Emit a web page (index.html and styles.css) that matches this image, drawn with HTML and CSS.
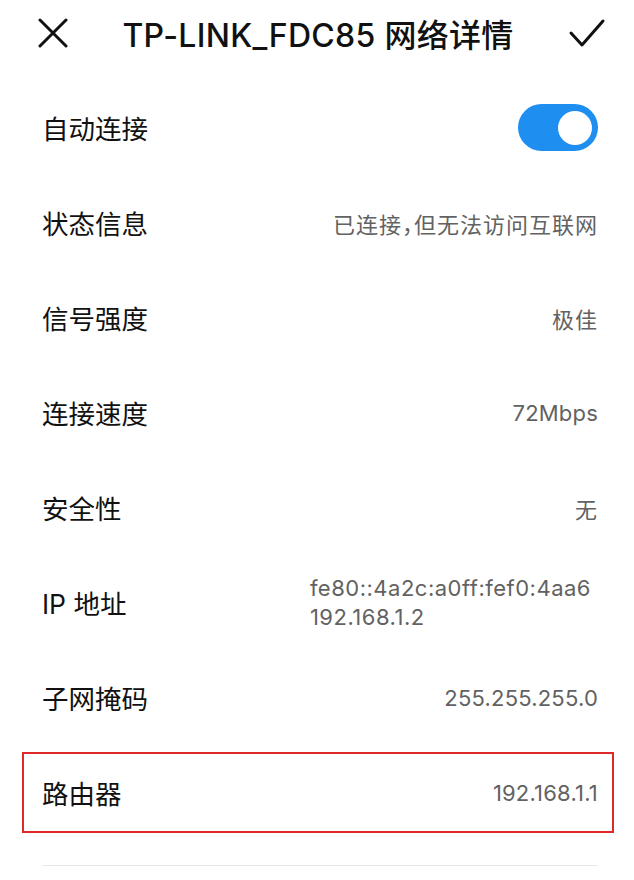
FILE: index.html
```html
<!DOCTYPE html>
<html lang="zh-CN">
<head>
<meta charset="UTF-8">
<meta name="viewport" content="width=device-width, initial-scale=1.0">
<title>网络详情</title>
<link rel="stylesheet" href="styles.css">
</head>
<body>
<div class="page">
    <div class="header">
        <svg class="icon" width="30" height="30" viewBox="0 0 30 30">
            <path d="M2 2 L28 28 M28 2 L2 28" stroke="#111" stroke-width="3" fill="none" stroke-linecap="round"/>
        </svg>
        <h1>TP-LINK_FDC85 网络详情</h1>
        <svg class="icon" width="38" height="30" viewBox="0 0 38 30">
            <path d="M3 15 L14 27 L35 3" stroke="#111" stroke-width="3" fill="none" stroke-linecap="round" stroke-linejoin="round"/>
        </svg>
    </div>

    <div class="list">
        <div class="row">
            <span class="label">自动连接</span>
            <span class="switch on"><span class="knob"></span></span>
        </div>
        <div class="row">
            <span class="label">状态信息</span>
            <span class="value">已连接，但无法访问互联网</span>
        </div>
        <div class="row">
            <span class="label">信号强度</span>
            <span class="value">极佳</span>
        </div>
        <div class="row">
            <span class="label">连接速度</span>
            <span class="value latin">72Mbps</span>
        </div>
        <div class="row">
            <span class="label">安全性</span>
            <span class="value">无</span>
        </div>
        <div class="row">
            <span class="label">IP 地址</span>
            <span class="value latin multi">fe80::4a2c:a0ff:fef0:4aa6<br>192.168.1.2</span>
        </div>
        <div class="row">
            <span class="label">子网掩码</span>
            <span class="value latin">255.255.255.0</span>
        </div>
        <div class="row highlight">
            <span class="label">路由器</span>
            <span class="value latin">192.168.1.1</span>
        </div>
        <div class="divider"></div>
    </div>
</div>
</body>
</html>
```

FILE: styles.css
```css
body {
    margin: 0;
    padding: 0;
    background-color: #ffffff;
    font-family: Inter, "Noto Sans CJK SC", sans-serif;
    color: #111111;
}

.page {
    width: 634px;
    height: 880px;
    overflow: hidden;
}

.header {
    height: 66px;
    display: flex;
    align-items: center;
    justify-content: space-between;
    padding: 0 28px 0 38px;
}

.header h1 {
    margin: 0;
    font-size: 32px;
    font-weight: 500;
    letter-spacing: 0.3px;
}

.list {
    margin-top: 14px;
    padding: 0 36px 0 42px;
}

.row {
    height: 95px;
    display: flex;
    align-items: center;
    justify-content: space-between;
    box-sizing: border-box;
}

.label {
    font-size: 26.5px;
    color: #111111;
}

.value {
    font-size: 22px;
    color: #626262;
    letter-spacing: 1px;
    font-feature-settings: "halt";
}

.value.latin {
    letter-spacing: 0.2px;
    font-feature-settings: normal;
}

.value.multi {
    line-height: 29px;
    text-align: left;
    letter-spacing: 0.5px;
    margin-right: 7px;
}

.switch {
    width: 80px;
    height: 47px;
    border-radius: 24px;
    background-color: #1e8ef0;
    display: flex;
    align-items: center;
    justify-content: flex-end;
    padding: 0 6px;
    box-sizing: border-box;
}

.knob {
    width: 34px;
    height: 34px;
    border-radius: 50%;
    background-color: #ffffff;
}

.highlight {
    height: 81px;
    margin: 7px -16px 7px -20px;
    padding: 0 14px 0 18px;
    border: 2px solid #e02828;
}

.divider {
    margin-top: 32px;
    height: 1px;
    background-color: #e8e8e8;
}
```
